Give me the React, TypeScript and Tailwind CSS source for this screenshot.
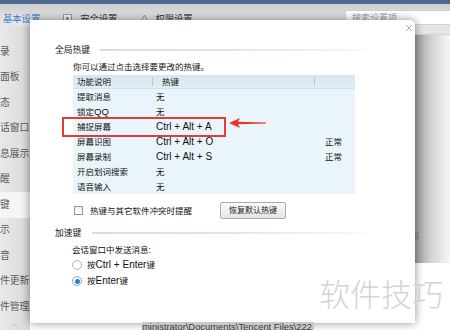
import React from "react";

const sideItems = [
  "录",
  "面板",
  "态",
  "话窗口",
  "息展示",
  "醒",
  "键",
  "示",
  "音",
  "件更新",
  "件管理",
];

const hotkeys = [
  { name: "提取消息", key: "无", state: "" },
  { name: "锁定QQ", key: "无", state: "" },
  { name: "捕捉屏幕", key: "Ctrl + Alt + A", state: "" },
  { name: "屏幕识图", key: "Ctrl + Alt + O", state: "正常" },
  { name: "屏幕录制", key: "Ctrl + Alt + S", state: "正常" },
  { name: "开启划词搜索", key: "无", state: "" },
  { name: "语音输入", key: "无", state: "" },
];

const SectionTitle = ({ title, gap }: { title: string; gap: string }) => (
  <div className="flex items-center h-[12px]">
    <span className="text-[8.75px] leading-[12px] text-[#111]">{title}</span>
    <div
      className={`${gap} flex-1 h-[2px] bg-gradient-to-r from-[#d3dee6] via-[#dde6ec] to-[#f7f9fa]`}
    />
  </div>
);

const Radio = ({ checked }: { checked?: boolean }) => (
  <span
    className={`flex items-center justify-center w-[10px] h-[10px] rounded-full border bg-white ${
      checked ? "border-[#7aaad6]" : "border-[#b4b4b4]"
    }`}
  >
    {checked && <span className="w-[5px] h-[5px] rounded-full bg-[#1c86dc]" />}
  </span>
);

export default function App() {
  return (
    <div className="relative w-[450px] h-[330px] overflow-hidden bg-white font-['Liberation_Sans','Noto_Sans_CJK_SC',sans-serif] text-[#333]">
      {/* window title strip */}
      <div className="h-[4px] bg-[#4c6890]" />

      {/* tabs */}
      <div className="h-[22px] flex items-end pb-[1px] bg-gradient-to-b from-[#cdcdcd] via-[#dedede] to-[#e7e7e7]">
        <span className="ml-[3px] text-[9.3px] leading-[12px] text-[#3b7dc4]">
          基本设置
        </span>
        <span className="ml-[23px] mb-[2px] w-[9px] h-[9px] border border-[#9a9a9a] bg-[#f2f2f2] flex items-center justify-center">
          <span className="w-[3px] h-[3px] bg-[#9a9a9a]" />
        </span>
        <span className="ml-[8px] text-[9.3px] leading-[12px] text-[#333]">
          安全设置
        </span>
        <svg
          className="ml-[23px] mb-[2px]"
          width="9"
          height="9"
          viewBox="0 0 9 9"
          fill="none"
          stroke="#8a8a8a"
          strokeWidth="0.9"
        >
          <path d="M4.5 1 L1 7.5 H8 Z" />
        </svg>
        <span className="ml-[6px] text-[9.3px] leading-[12px] text-[#333]">
          权限设置
        </span>
        <div className="ml-auto w-[105px] h-[15px] border border-[#cfcfcf] border-r-0 bg-white flex items-center pl-[6px]">
          <span className="text-[9px] leading-[12px] text-[#a0a0a0]">
            搜索设置项
          </span>
        </div>
      </div>

      {/* body */}
      <div className="flex h-[304px]">
        <div className="w-[30px] pt-[13px] bg-gradient-to-r from-[#e9e9e9] to-[#d9d9d9] flex flex-col">
          {sideItems.map((item, i) => (
            <div
              key={item}
              className={`h-[25.5px] flex items-center text-[9.8px] leading-[12px] text-[#5a5a5a] whitespace-nowrap overflow-hidden ${
                i === 6 ? "bg-[#f5f5f5]" : ""
              }`}
            >
              {item}
            </div>
          ))}
          <div className="mt-auto mb-[2px] flex justify-center">
            <svg width="8" height="5" viewBox="0 0 8 5" fill="none" stroke="#c4c4c4">
              <path d="M1 4 L4 1 L7 4" />
            </svg>
          </div>
        </div>

        <div className="flex-1 flex flex-col">
          <div className="h-[9px] bg-[#e4e4e4] border-b border-[#d2d2d2]" />
          <div className="flex">
            <div className="flex-1" />
            <div className="relative w-[35px] h-[228px] bg-gradient-to-r from-[#9c9c9c] via-[#d6d6d6] to-[#f6f6f6]">
              <span className="absolute left-[-4px] top-[197px] text-[8px] leading-[10px] text-[#777]">
                码
              </span>
            </div>
          </div>
        </div>
      </div>

      {/* hotkey dialog */}
      <div className="absolute left-[30px] top-[20px] w-[385px] h-[303px] bg-white rounded-tr-[5px] rounded-bl-[2px] shadow-[0_0_10px_rgba(0,0,0,0.45)] pt-[24px] pl-[25px] pr-[50px] text-[8.5px] text-[#111]">
        <svg
          className="absolute left-[375px] top-[4px]"
          width="8"
          height="8"
          viewBox="0 0 8 8"
          stroke="#a6a6a6"
          strokeWidth="0.9"
        >
          <path d="M1 1 L7 7 M7 1 L1 7" />
        </svg>

        <SectionTitle title="全局热键" gap="ml-[10px]" />

        <div className="ml-[18px]">
          <div className="mt-[5px] h-[12px] leading-[12px]">
            你可以通过点击选择要更改的热键。
          </div>

          <div className="mt-[2px] w-[282px] bg-[#eaf5fb]">
            <div className="flex h-[14px] items-center bg-gradient-to-b from-[#d6e6f1] to-[#e2edf5] border-b border-[#d2e2ed]">
              <div className="w-[79px] pl-[4px] leading-[12px]">功能说明</div>
              <div className="w-[1px] h-[9px] bg-[#b9c9d5]" />
              <div className="w-[161px] pl-[9px] leading-[12px]">热键</div>
              <div className="w-[1px] h-[9px] bg-[#b9c9d5]" />
            </div>
            {hotkeys.map((row) => (
              <div key={row.name} className="flex h-[15px] items-center">
                <div className="w-[79px] pl-[4px] leading-[12px] whitespace-nowrap">
                  {row.name.replace("QQ", "")}
                  {row.name.includes("QQ") && (
                    <span className="text-[9.5px]">QQ</span>
                  )}
                </div>
                <div className="w-[162px] pl-[4px] leading-[12px]">
                  {row.key === "无" ? (
                    "无"
                  ) : (
                    <span className="text-[10px]">{row.key}</span>
                  )}
                </div>
                <div className="pl-[11px] leading-[12px]">{row.state}</div>
              </div>
            ))}
          </div>

          <div className="mt-[8px] h-[17px] flex items-center">
            <div className="w-[147px] flex items-center">
              <span className="ml-[1px] w-[9px] h-[9px] border border-[#939393] bg-gradient-to-b from-[#f0f0f0] to-white" />
              <span className="ml-[7px] leading-[12px]">热键与其它软件冲突时提醒</span>
            </div>
            <button className="w-[66px] h-[17px] border border-[#ababab] rounded-[2px] bg-gradient-to-b from-[#fafafa] to-[#e5e5e5] text-[8px] leading-[12px] text-[#222]">
              恢复默认热键
            </button>
          </div>
        </div>

        <div className="mt-[8px]">
          <SectionTitle title="加速键" gap="ml-[11px]" />
        </div>

        <div className="ml-[17px]">
          <div className="mt-[5px] h-[12px] leading-[12px]">会话窗口中发送消息:</div>
          <div className="mt-[1px] h-[16px] flex items-center">
            <Radio />
            <span className="ml-[5px] leading-[12px]">
              按<span className="text-[10px]">Ctrl + Enter</span>键
            </span>
          </div>
          <div className="h-[16px] flex items-center">
            <Radio checked />
            <span className="ml-[5px] leading-[12px]">
              按<span className="text-[10px]">Enter</span>键
            </span>
          </div>
        </div>

        {/* annotation */}
        <div className="absolute left-[32px] top-[97px] w-[164px] h-[20px] border-2 border-[#e33a3a]" />
        <svg
          className="absolute left-[198px] top-[97px]"
          width="40"
          height="12"
          viewBox="0 0 40 12"
        >
          <polygon
            points="1,6 12,1 10,4.8 38,5.5 38,6.5 10,7.2 12,11"
            fill="#e8332e"
          />
        </svg>
      </div>

      {/* path text under the dialog */}
      <div className="absolute left-[142px] top-[322px] h-[8px] pr-[2px] bg-[#c9c9c9] text-[9.4px] leading-[9px] text-[#3a3a3a] whitespace-nowrap">
        ministrator\Documents\Tencent Files\222
      </div>

      {/* watermark */}
      <div className="absolute left-[319px] top-[276px] text-[31px] leading-[34px] font-light text-[#d4d4d4] font-['Noto_Sans_CJK_SC',sans-serif] whitespace-nowrap">
        软件技巧
      </div>
    </div>
  );
}
